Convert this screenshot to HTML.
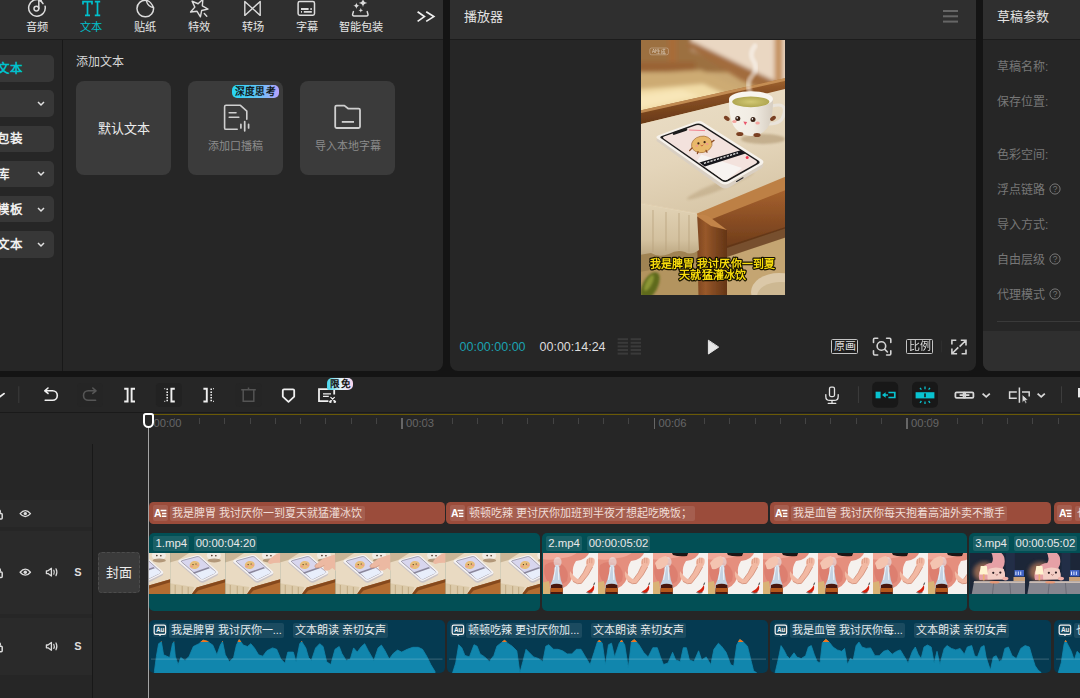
<!DOCTYPE html>
<html lang="zh-CN"><head><meta charset="utf-8"><title>editor</title>
<style>
*{box-sizing:border-box;margin:0;padding:0}
html,body{width:1080px;height:698px;overflow:hidden;background:#141414}
body{position:relative;font-family:"Liberation Sans",sans-serif;color:#e4e4e4;font-size:12px;line-height:1}
.abs{position:absolute}
.panel{position:absolute;background:#262626;overflow:hidden}
.hdr{position:absolute;left:0;top:0;right:0;height:40px;background:#2f2f2f;border-bottom:1px solid #1c1c1c}
.t{position:absolute;white-space:nowrap;line-height:1}
.tab{position:absolute;top:20px;width:54px;text-align:center;font-size:11.2px;line-height:14px;color:#e6e6e6}
.sbtn{position:absolute;left:-6px;width:60px;height:26.4px;background:#373737;border-radius:5px;color:#efefef;font-size:12.5px;font-weight:bold}
.sbtn span{position:absolute;left:-23px;top:7.8px;white-space:nowrap}
.card{position:absolute;top:81px;width:95px;height:94.4px;background:#3b3b3b;border-radius:8px}
.card .lbl{position:absolute;left:0;right:0;top:60px;text-align:center;font-size:11px;color:#8c8c8c;white-space:nowrap}
.plabel{position:absolute;left:14px;font-size:12px;color:#777;white-space:nowrap}
.row{position:absolute;left:0;width:92px;background:#2a2a2a}
.clip{position:absolute;overflow:hidden}
.chip{position:absolute;height:15px;border-radius:2px;white-space:nowrap;font-size:11px;line-height:15px;padding:0 2px;color:#e9e9e9;overflow:hidden}
svg{position:absolute;overflow:visible}
</style></head>
<body>
<svg style="left:0;top:0" width="0" height="0"><defs>
<filter id="tb" x="-10%" y="-10%" width="120%" height="120%"><feGaussianBlur stdDeviation="0.55"/></filter>
<filter id="tb2" x="-40%" y="-40%" width="180%" height="180%"><feGaussianBlur stdDeviation="2.2"/></filter>
<symbol id="thA" viewBox="0 0 55.3 41" preserveAspectRatio="none"><g filter="url(#tb)">
<rect x="-2" y="-2" width="60" height="45" fill="#e9dac2"/>
<polygon points="-2,-2 22,-2 8,7 -2,10" fill="#c9b596"/>
<ellipse cx="43.6" cy="2.4" rx="7" ry="5" fill="#f1ece4"/><ellipse cx="44" cy="7.4" rx="6.6" ry="2" fill="#9a7a58" opacity=".7"/>
<circle cx="41.6" cy="2.6" r=".8" fill="#3a2418"/><circle cx="45.6" cy="2.8" r=".8" fill="#3a2418"/>
<polygon points="20,43 26.5,34.4 58,25.4 58,43" fill="#b36d32"/>
<polygon points="20,43 26.5,34.4 58,25.4 58,28.4 28,37.4 23,43" fill="#86491f"/>
<polygon points="-2,30 24,34 21,43 -2,43" fill="#dccaa9"/>
<path d="M5 32V43M12 33V43M18 34V43" stroke="#c4ae88" stroke-width="1.2"/>
<path d="M8.6 10.6Q7 9.4 9 8.4L26.6 3.4Q28.6 3 30.2 4.2L47.4 19.6Q48.8 21 47 22.6L33.6 29.4Q31.6 30.4 29.8 29Z" fill="#c9c3c6"/>
<path d="M8.6 9.2Q7 8 9 7L26.6 2Q28.6 1.6 30.2 2.8L47.4 18.2Q48.8 19.6 47 21L33.6 27.6Q31.6 28.6 29.8 27.2Z" fill="#f4f2f4"/>
<path d="M11.4 9Q10.4 8.2 11.8 7.6L26.8 3.6Q28.2 3.4 29.4 4.2L45 18.4Q46 19.4 44.6 20.2L33.4 25.8Q31.8 26.4 30.4 25.4Z" fill="#d8d6ee" stroke="#5a5560" stroke-width=".45"/>
<path d="M24 19L38.6 14.6L45 18.4Q46 19.4 44.6 20.2L33.4 25.8Q31.8 26.4 30.4 25.4Z" fill="#e8eefb"/>
<path d="M22.6 19.6L38.4 14L39.6 15.2L24 20.8Z" fill="#8b879c"/>
<ellipse cx="24.4" cy="12" rx="5" ry="4" fill="#e8be78" transform="rotate(-14 24.4 12)"/>
<circle cx="22.8" cy="11.6" r=".6" fill="#3a2418"/><circle cx="25.8" cy="11" r=".6" fill="#3a2418"/>
<ellipse cx="21.6" cy="13.4" rx="1.4" ry=".8" fill="#f09a8c"/><ellipse cx="27.4" cy="12.2" rx="1.4" ry=".8" fill="#f09a8c"/>
</g></symbol>
<symbol id="thA2" viewBox="0 0 55.3 41" preserveAspectRatio="none"><use href="#thA" x="0" y="0" width="55.3" height="41"/><g filter="url(#tb)">
<path d="M58 1Q44 3 36 11Q33 14 36.4 15Q41 14.6 44 12.4Q42 16 44.6 17.4Q49 18 52 15L58 20Z" fill="#ecb9a2"/>
<path d="M36 11Q33 14 36.4 15Q41 14.6 44 12.4" fill="none" stroke="#cf8f78" stroke-width=".7"/>
</g></symbol>
<symbol id="thA3" viewBox="0 0 55.3 41" preserveAspectRatio="none"><use href="#thA" x="0" y="0" width="55.3" height="41"/><g filter="url(#tb)">
<path d="M58 -1Q48 1 43 8Q42 11 45 11Q50 9 58 10Z" fill="#ecb9a2"/></g></symbol>
<symbol id="thB" viewBox="0 0 55.3 41" preserveAspectRatio="none"><g filter="url(#tb)">
<rect x="-2" y="-2" width="60" height="45" fill="#f5f1ee"/>
<path d="M-2 -2H47Q44 7 33 8Q29 14 30 20Q29 31 20 35Q8 38 -2 30Z" fill="#e58f7e"/>
<path d="M-2 -2H36Q30 4 20 5Q8 8 -2 6Z" fill="#f0a898"/>
<path d="M2 12Q10 6 20 12Q27 18 24 28Q16 35 6 30Q-1 22 2 12Z" fill="#d97a6c" opacity=".75"/>
<path d="M27 18Q31 24 35.4 26.4Q41 20 43.6 12.6Q42 8 45 5.4Q48.6 3.4 51.4 6Q52.6 10 49.6 14Q46 22 38.4 30.4Q34.6 32 30 28.4Q26 24 27 18Z" fill="#f2b9a3"/>
<path d="M35.4 26.4Q41 20 43.6 12.6M30 28.4Q34.6 32 38.4 30.4Q46 22 49.6 14" fill="none" stroke="#cc836c" stroke-width=".7"/>
<path d="M44.4 6V11M46.6 4.6V10M48.8 5V10.4" stroke="#d8957e" stroke-width=".7"/>
<polygon points="-2,30 6,28 8,43 -2,43" fill="#d9b274"/>
<path d="M12.8 12Q11 14 11.6 18L9.4 27Q7 31 7 36V43H20V36Q20 31 17.8 27L16.4 18Q17 14 15.4 12Z" fill="#c3d2e2"/>
<path d="M8 32Q13.4 29.6 19.4 32L20 43H7Z" fill="#4a180a"/>
<path d="M7.6 35H19.8V39H7.4Z" fill="#b4581c"/>
<path d="M12.6 14L10.6 27M15.2 14L15.8 27" stroke="#fff" stroke-width=".9" opacity=".8"/>
<ellipse cx="14.6" cy="9" rx="4" ry="5" fill="#e8eef4" opacity=".55"/>
<path d="M44 38.4Q48.6 36.6 50.8 32Q52.4 36.6 48.6 39.6Q46 40.8 44 38.4Z" fill="#d4220f"/>
<path d="M50.8 32L51.6 29.6" stroke="#2c2c2c" stroke-width=".9"/>
<path d="M43.4 39.4Q46.4 41 49.4 39.6" stroke="#4a4a4a" stroke-width=".8" fill="none"/>
</g></symbol>
<symbol id="thB2" viewBox="0 0 55.3 41" preserveAspectRatio="none"><use href="#thB" x="0" y="0" width="55.3" height="41"/><g filter="url(#tb)">
<path d="M18 -2H36L34 3Q26 4 20 2Z" fill="#1c1414"/>
<path d="M2 10Q6 4 13 3Q17 6 14 12Q9 17 4 16Z" fill="#f4c4b0"/>
</g></symbol>
<symbol id="thC" viewBox="0 0 55.3 41" preserveAspectRatio="none"><g filter="url(#tb)">
<rect x="-2" y="-2" width="60" height="45" fill="#1b2537"/>
<rect x="36" y="-2" width="9" height="30" fill="#222e46"/>
<ellipse cx="15" cy="19" rx="11" ry="10" fill="#f09a66" opacity=".55" filter="url(#tb2)"/>
<path d="M21 -2Q32 -3 34.4 4Q36 11 33 15Q36 20 35 26L10 27Q8 20 12 15Q17 10 22 10Q25 6 21 -2Z" fill="#e6a0a6"/>
<path d="M19 16Q26 13 34 16Q36 21 35 26.6H18Q17 21 19 16Z" fill="#f3cdc4"/>
<circle cx="23.6" cy="19.8" r="1.1" fill="#2a1c20"/><circle cx="30.6" cy="19.6" r="1.1" fill="#2a1c20"/>
<path d="M26 21.4Q27.2 23 28.4 21.4" stroke="#7a3a3a" stroke-width=".6" fill="none"/>
<ellipse cx="35.6" cy="25.6" rx="3" ry="1.8" fill="#f0b0a8"/>
<path d="M11.2 13H17.2L18.4 21.4H10Z" fill="#fff3cf"/>
<rect x="13.4" y="21.4" width="1.6" height="6" fill="#e8b070"/>
<rect x="44.6" y="17" width="9.4" height="6.4" fill="#3f62c4"/>
<path d="M46 18.4V22M48.4 18.4V22M50.8 18.4V22" stroke="#dfe8ff" stroke-width="1"/>
<rect x="43.6" y="24" width="14" height="4.6" fill="#c9a27a"/>
<polygon points="4.6,28.2 58,28.2 58,43 2,43" fill="#86868f"/>
<polygon points="4.6,28.2 58,28.2 58,30 4.2,30" fill="#cbbcb4"/>
<path d="M24 30L22.6 43M40 30L41 43" stroke="#6c6c76" stroke-width="1"/>
<ellipse cx="25" cy="29.2" rx="5" ry="1.2" fill="#f2946a" opacity=".8"/>
</g></symbol>
</defs></svg>
<div class="panel" style="left:0;top:0;width:443px;height:371px;border-radius:0 0 8px 0">
<div class="hdr"></div>
<div class="tab" style="left:10px;color:#e6e6e6">音频</div>
<div class="tab" style="left:64px;color:#00c1cd">文本</div>
<div class="tab" style="left:118px;color:#e6e6e6">贴纸</div>
<div class="tab" style="left:172px;color:#e6e6e6">特效</div>
<div class="tab" style="left:226px;color:#e6e6e6">转场</div>
<div class="tab" style="left:280px;color:#e6e6e6">字幕</div>
<div class="tab" style="left:334px;color:#e6e6e6">智能包装</div>
<svg style="left:0;top:0" width="1" height="1" fill="none" stroke="#d6d6d6" stroke-width="1.5" stroke-linecap="round" stroke-linejoin="round" ><path d="M41.2 0.7A8.3 8.3 0 1 0 45.1 6.2" stroke="#dcdcdc"/><circle cx="36.4" cy="8.6" r="2.4" stroke="#dcdcdc"/><path d="M38.8 8.6V-1M38.8 0.2Q41.5 0.8 43 3.6" stroke="#dcdcdc"/><path d="M83 4.4V1.7H92V4.4M87.5 1.7V15.3M85 15.3H90M94.8 1.7H100.2M97.5 1.7V15.3M94.8 15.3H100.2" stroke="#00c1cd" stroke-width="1.7" stroke-linecap="butt" stroke-linejoin="miter"/><path d="M146 0.3A8.3 8.3 0 1 0 153.5 7.6" stroke="#dcdcdc"/><path d="M146 0.3Q150.5 0.6 153.5 7.6Q148.2 7.2 146 0.3Z" stroke="#dcdcdc" stroke-width="1.3"/><path d="M202.88 -0.66L202.33 5.82L208.01 8.99L201.68 10.48L200.41 16.86L197.05 11.30L190.59 12.07L194.84 7.14L192.11 1.24L198.11 3.76Z" stroke="#dcdcdc" stroke-width="1.4"/><path d="M204.3 13.6L206.8 16.3" stroke="#dcdcdc" stroke-width="1.4"/><path d="M244.8 1.4V15.4L260.2 1.4V15.4Z" stroke="#dcdcdc" stroke-width="1.4"/><rect x="298.1" y="1.6" width="16.4" height="13.6" rx="1.6" stroke="#dcdcdc"/><path d="M301 9H308.6M310.4 9H311.8M301 11.8H302M303.8 11.8H311.8" stroke="#dcdcdc" stroke-width="1.8" stroke-linecap="butt"/><path d="M353.4 11.6L352.6 14.4Q352.4 16 354 16H366.6Q368.2 16 368 14.4L367.2 11.6" stroke="#dcdcdc"/><path d="M363 -1.2999999999999998Q363.3612 2.6388 367.3 3Q363.3612 3.3612 363 7.3Q362.6388 3.3612 358.7 3Q362.6388 2.6388 363 -1.2999999999999998ZM356.4 2.5Q356.67719999999997 5.5228 359.7 5.8Q356.67719999999997 6.0771999999999995 356.4 9.1Q356.1228 6.0771999999999995 353.09999999999997 5.8Q356.1228 5.5228 356.4 2.5ZM360.8 8.0Q360.9932 10.106800000000002 363.1 10.3Q360.9932 10.4932 360.8 12.600000000000001Q360.6068 10.4932 358.5 10.3Q360.6068 10.106800000000002 360.8 8.0Z" fill="#dcdcdc" stroke="none"/><path d="M417.6 11.8L424.4 16.6L417.6 21.4M426.2 11.8L433.8 16.6L426.2 21.4" stroke="#f0f0f0" stroke-width="1.7" stroke-linecap="butt" stroke-linejoin="miter"/></svg>
<div class="abs" style="left:62px;top:40px;width:1px;height:331px;background:#181818"></div>
<div class="sbtn" style="top:55.2px;color:#00c1cd"><span>新建文本</span></div>
<div class="sbtn" style="top:90.4px;color:#efefef"><span>花字</span><svg style="left:42.5px;top:10.5px" width="8" height="6" viewBox="0 0 8 6"><path d="M1 1l3 3 3-3" fill="none" stroke="#e0e0e0" stroke-width="1.5"/></svg></div>
<div class="sbtn" style="top:125.6px;color:#efefef"><span>智能包装</span></div>
<div class="sbtn" style="top:160.8px;color:#efefef"><span>素材库</span><svg style="left:42.5px;top:10.5px" width="8" height="6" viewBox="0 0 8 6"><path d="M1 1l3 3 3-3" fill="none" stroke="#e0e0e0" stroke-width="1.5"/></svg></div>
<div class="sbtn" style="top:196.0px;color:#efefef"><span>文字模板</span><svg style="left:42.5px;top:10.5px" width="8" height="6" viewBox="0 0 8 6"><path d="M1 1l3 3 3-3" fill="none" stroke="#e0e0e0" stroke-width="1.5"/></svg></div>
<div class="sbtn" style="top:231.2px;color:#efefef"><span>识别文本</span><svg style="left:42.5px;top:10.5px" width="8" height="6" viewBox="0 0 8 6"><path d="M1 1l3 3 3-3" fill="none" stroke="#e0e0e0" stroke-width="1.5"/></svg></div>
<div class="t" style="left:76px;top:56px;font-size:12px;color:#d6d6d6">添加文本</div>
<div class="card" style="left:76px"><div class="t" style="left:0;width:95px;text-align:center;top:41px;font-size:13px;color:#ececec">默认文本</div></div>
<div class="card" style="left:188px"><svg style="left:-188px;top:-81px" width="1" height="1" fill="none" stroke="#cfcfcf" stroke-width="1.6" stroke-linecap="round" stroke-linejoin="round"><path d="M237.2 129.3H226Q224.6 129.3 224.6 127.9V106.7Q224.6 105.3 226 105.3H240.4L246.8 111.2V119.2"/><path d="M229.2 112.7H236M229.2 117.3H238.8"/><path d="M240.9 124.4V128M244.7 121.5V130.8M248.6 124.4V128" stroke-width="1.7"/></svg><div class="lbl">添加口播稿</div><div class="abs" style="left:44px;top:4px;width:47px;height:13px;border-radius:5px;background:linear-gradient(90deg,#27d5f2 0%,#62c4f6 55%,#b7a2ff 100%);color:#101820;font-size:9.7px;font-weight:bold;line-height:13px;text-align:center;letter-spacing:0.4px">深度思考</div></div>
<div class="card" style="left:300px"><svg style="left:-300px;top:-81px" width="1" height="1" fill="none" stroke="#cfcfcf" stroke-width="1.6" stroke-linecap="round" stroke-linejoin="round"><path d="M336.6 105.6H344.4L348.4 108.7H358.6Q360 108.7 360 110.1V126.6Q360 128 358.6 128H336.6Q335.2 128 335.2 126.6V107Q335.2 105.6 336.6 105.6Z" stroke-width="1.8"/><path d="M341.8 121.9H354" stroke-width="1.8" stroke-linecap="butt"/></svg><div class="lbl">导入本地字幕</div></div>
</div>
<div class="panel" style="left:450px;top:0;width:526px;height:371px;border-radius:0 0 8px 8px">
<div class="hdr"></div>
<div class="t" style="left:14px;top:10px;font-size:13px;color:#e2e2e2">播放器</div>
<div class="abs" style="left:493px;top:10px;width:15px;height:1.5px;background:#666;box-shadow:0 5.3px 0 #666,0 10.6px 0 #666"></div>
<svg style="left:191px;top:40px;overflow:hidden" width="144" height="255" viewBox="0 0 144 255">
<defs>
<filter id="bl3" x="-20%" y="-20%" width="140%" height="140%"><feGaussianBlur stdDeviation="2.2"/></filter>
<filter id="bl1" x="-20%" y="-20%" width="140%" height="140%"><feGaussianBlur stdDeviation="0.9"/></filter>
<filter id="bl05" x="-20%" y="-20%" width="140%" height="140%"><feGaussianBlur stdDeviation="0.45"/></filter>
<linearGradient id="gEdge" x1="0" y1="0" x2="0.22" y2="1"><stop offset="0" stop-color="#b87c40"/><stop offset="0.4" stop-color="#8e5426"/><stop offset="1" stop-color="#643616"/></linearGradient>
<linearGradient id="gCloth" x1="0" y1="0" x2="0.3" y2="1"><stop offset="0" stop-color="#ebdfc8"/><stop offset="0.6" stop-color="#e4d5ba"/><stop offset="1" stop-color="#d9c8a9"/></linearGradient>
<linearGradient id="gHang" x1="0" y1="0" x2="0" y2="1"><stop offset="0" stop-color="#e2d3b6"/><stop offset="0.7" stop-color="#d3c19f"/><stop offset="1" stop-color="#bba680"/></linearGradient>
<linearGradient id="gLeg" x1="0" y1="0" x2="1" y2="0"><stop offset="0" stop-color="#7c4520"/><stop offset="0.3" stop-color="#98582a"/><stop offset="0.55" stop-color="#834a22"/><stop offset="1" stop-color="#643516"/></linearGradient>
<linearGradient id="gApron" x1="0" y1="0" x2="0" y2="1"><stop offset="0" stop-color="#a6622e"/><stop offset="0.5" stop-color="#8a4e24"/><stop offset="1" stop-color="#6e3c1a"/></linearGradient>
<linearGradient id="gCup" x1="0" y1="0" x2="1" y2="0"><stop offset="0" stop-color="#f6f2ea"/><stop offset="0.55" stop-color="#f1ece3"/><stop offset="1" stop-color="#d6cdc0"/></linearGradient>
<radialGradient id="gTea" cx="0.5" cy="0.5" r="0.6"><stop offset="0" stop-color="#d2c873"/><stop offset="1" stop-color="#a9a04a"/></radialGradient>
</defs>
<rect width="144" height="255" fill="#c9a772"/>
<g filter="url(#bl3)">
<rect x="-8" y="-8" width="160" height="40" fill="#9c7040"/>
<polygon points="50,-8 152,-8 152,56 104,36 50,10" fill="#ead7c2"/>
<polygon points="44,5 52,2 152,50 152,62 100,40" fill="#a26c3c"/>
<rect x="27.5" y="-8" width="8" height="44" fill="#a86c38"/>
<rect x="-8" y="22" width="62" height="10" fill="#9a6434"/>
<rect x="133.5" y="-8" width="8" height="52" fill="#c59260"/>
<polygon points="-8,34 60,30 120,58 -8,90" fill="#cdab73"/>
<polygon points="-8,50 62,44 92,58 40,70 -8,80" fill="#f1dba6"/>
<polygon points="-8,56 40,50 60,56 -8,70" fill="#f8e6b8"/>
</g>
<g filter="url(#bl05)">
<polygon points="-2,70.8 146,37.8 146,49 -2,84.4" fill="url(#gEdge)"/>
<polygon points="-2,70.8 146,37.8 146,40.4 -2,73.6" fill="#cf9a5e" opacity=".8"/>
<!-- floor / rug under table -->
<polygon points="84,196 146,172 146,257 84,257" fill="#c4a572"/>
<polygon points="-2,206 58,206 58,257 -2,257" fill="#b3945f"/>
<polygon points="-2,206 58,206 58,222 -2,232" fill="#8f7448" opacity=".55"/>
<ellipse cx="138" cy="252" rx="28" ry="19" fill="#dbc8a8"/>
<ellipse cx="140" cy="256" rx="24" ry="14" fill="#cdb892"/>
<!-- table right: top face, apron, shadow -->
<polygon points="52,172 146,134 146,152 68,183" fill="#bd8045"/>
<polygon points="66,181 146,149.5 146,188 86,208" fill="url(#gApron)"/>
<polygon points="86,206 146,186.5 146,197 86,217" fill="#5d3418" opacity=".75"/>
<!-- leg -->
<polygon points="55.5,176 70,183 86,190 86,257 57.5,257" fill="url(#gLeg)"/>
<path d="M55.5 176Q62 172 70 178L86 190L70 186Z" fill="#c28448"/>
<!-- cloth -->
<polygon points="-2,84.6 146,48.6 146,136 56,173.6 -2,163" fill="url(#gCloth)"/>
<path d="M-2 163L56 173.6L58 210Q50 216 44 212Q36 209 28 214Q18 218 10 213L-2 215Z" fill="url(#gHang)"/>
<path d="M12 170V212M25 172V211M38 173V210M48 175V212" stroke="#b9a47e" stroke-width="1.6" opacity=".5" fill="none"/>
<path d="M-2 163L56 173.6" stroke="#efe3cb" stroke-width="1.2" opacity=".35"/>
</g>
<!-- cup shadow -->
<ellipse cx="122" cy="99" rx="22" ry="5" fill="#8a6a3c" opacity=".35" filter="url(#bl1)"/>
<ellipse cx="80" cy="147" rx="36" ry="4" fill="#8a6a3c" opacity=".22" filter="url(#bl1)" transform="rotate(-22 76 148)"/>
<!-- steam -->
<path d="M110 54Q104 44 111 36Q118 28 112 20Q108 13 114 6" stroke="#fff" stroke-width="5" fill="none" opacity=".45" filter="url(#bl1)" stroke-linecap="round"/>
<!-- cup -->
<g filter="url(#bl05)">
<path d="M131 66Q146 62 143 74Q141 84 128 84" fill="none" stroke="#e9e3da" stroke-width="3.2"/>
<path d="M88 59Q88 82 95 89Q102 96 110 96Q119 96 125.5 89Q132 82 132 59Z" fill="url(#gCup)"/>
<ellipse cx="110" cy="59" rx="22" ry="7.8" fill="#f8f5ef"/>
<ellipse cx="109.8" cy="61.8" rx="18.6" ry="5.4" fill="url(#gTea)"/>
<ellipse cx="85.8" cy="78.4" rx="3.2" ry="2" fill="#7a3f22" transform="rotate(35 85.8 78.4)"/>
<ellipse cx="132" cy="78.4" rx="3.2" ry="2" fill="#7a3f22" transform="rotate(-35 132 78.4)"/>
<ellipse cx="98.8" cy="94" rx="3.6" ry="2" fill="#7a3f22"/><ellipse cx="116" cy="95" rx="3.6" ry="2" fill="#7a3f22"/>
<circle cx="96.8" cy="78.6" r="2.5" fill="#3a2418"/><circle cx="112" cy="79.6" r="2.5" fill="#3a2418"/>
<circle cx="96.2" cy="77.9" r=".8" fill="#fff"/><circle cx="111.4" cy="78.9" r=".8" fill="#fff"/>
<ellipse cx="93.4" cy="81.6" rx="2.2" ry="1.5" fill="#f3a39d"/><ellipse cx="116.6" cy="83" rx="2.2" ry="1.5" fill="#f3a39d"/>
<path d="M102.4 81.6L106.2 82L104.2 85.2Z" fill="#e9566c"/>
</g>
<!-- phone -->
<g filter="url(#bl05)">
<path d="M17 102Q13.5 100 17.5 98.2L55 84.6Q59 83.2 62.4 85.4L120.6 122.6Q124.4 125 120.6 128.2L88 147.4Q84 149.6 80 147.2Z" fill="#d9cfc2"/>
<path d="M17 99Q13.5 97 17.5 95.2L55 81.6Q59 80.2 62.4 82.4L120.6 119.6Q124.4 122 120.6 124.8L88 143.4Q84 145.6 80 143.2Z" fill="#f6f2ec"/>
<path d="M20.4 98.6Q18 97.2 20.8 96L55 83.8Q58.2 82.8 61 84.6L117.4 120.4Q120 122.2 117.2 124L87 141.2Q84 142.8 81 141Z" fill="#1d1b1c"/>
<path d="M22.6 98.4Q21 97.4 23 96.6L55.2 85.2Q57.8 84.4 60.2 85.8L115.2 120.8Q117 122.2 115 123.4L86.6 139.6Q84 140.8 81.6 139.4Z" fill="#f3e2dd"/>
<path d="M60.2 114.4L101 128L86.6 139.6Q84 140.8 81.6 139.4L56 121Z" fill="#f7f3f1"/>
<path d="M58.4 122.6L99.6 110.2L104.6 113.6L63.8 126.6Z" fill="#19171a"/>
<path d="M63 123.4L97 112.8" stroke="#e8e8e8" stroke-width="1.3" stroke-dasharray="2.2 1.2"/>
<circle cx="106.2" cy="117.6" r="1.5" fill="#f0384e"/>
<path d="M33 93.6L45 89.4" stroke="#1d1b1c" stroke-width="2.6" stroke-linecap="round"/>
<path d="M48 90L64 90.6" stroke="#f06a7a" stroke-width="1" opacity=".8"/>
<ellipse cx="60.8" cy="104.4" rx="10.4" ry="8.2" fill="#e9b96a" stroke="#9a6228" stroke-width=".6" transform="rotate(-12 60.8 104.4)"/>
<circle cx="57.4" cy="103.4" r="1.1" fill="#3a2418"/><circle cx="63.6" cy="102.2" r="1.1" fill="#3a2418"/>
<ellipse cx="55.8" cy="105.8" rx="1.5" ry=".9" fill="#f29a8c"/><ellipse cx="66" cy="104" rx="1.5" ry=".9" fill="#f29a8c"/>
<path d="M59.6 105.2Q61 107 62.4 104.8" stroke="#b8402c" stroke-width=".7" fill="none"/>
<path d="M51 108L48.6 110.6M70.6 102L73 100.4M57 111.6L56.4 113.6M65 110.4L66 112.2" stroke="#8a4a22" stroke-width="1.3" stroke-linecap="round"/>
<path d="M95.6 141.4L102 137.8" stroke="#2a2828" stroke-width="1.2" stroke-linecap="round"/>
</g>
<!-- leaf -->
<ellipse cx="9" cy="246" rx="7.5" ry="15" fill="#5f6b1e" transform="rotate(28 9 246)" filter="url(#bl1)"/>
<ellipse cx="8" cy="243" rx="3" ry="9" fill="#8c9636" transform="rotate(28 8 243)" filter="url(#bl1)"/>
<!-- AI tag -->
<rect x="8.8" y="8" width="18.6" height="6.8" rx="1.8" fill="none" stroke="#fff" stroke-width=".5" opacity=".55"/>
<text x="18.1" y="13.2" font-size="4.6" fill="#fff" opacity=".7" text-anchor="middle" font-family="Liberation Sans, sans-serif">AI生成</text>
<!-- subtitles -->
<g font-family="Liberation Sans, sans-serif" font-weight="bold" font-size="10.8" text-anchor="middle" stroke-linejoin="round">
<text x="71.4" y="227.6" stroke="#141000" stroke-width="2.4" fill="#141000" textLength="125" lengthAdjust="spacingAndGlyphs">我是脾胃 我讨厌你一到夏</text>
<text x="71.4" y="227.6" fill="#f7dc0c" textLength="125" lengthAdjust="spacingAndGlyphs">我是脾胃 我讨厌你一到夏</text>
<text x="71.8" y="239.2" stroke="#141000" stroke-width="2.4" fill="#141000" textLength="67" lengthAdjust="spacingAndGlyphs">天就猛灌冰饮</text>
<text x="71.8" y="239.2" fill="#f7dc0c" textLength="67" lengthAdjust="spacingAndGlyphs">天就猛灌冰饮</text>
</g>
</svg>
<div class="t" style="left:9.5px;top:341px;font-size:12.5px;color:#1ba1b0">00:00:00:00</div>
<div class="t" style="left:89.5px;top:341px;font-size:12.5px;color:#dcdcdc">00:00:14:24</div>
<svg style="left:0;top:0" width="1" height="1" fill="none" stroke="#d6d6d6" stroke-width="1.5" stroke-linecap="round" stroke-linejoin="round" ><rect x="167.60000000000002" y="338.2" width="10.4" height="2" fill="#3a3a3a" stroke="none"/><rect x="167.60000000000002" y="341.8" width="10.4" height="2" fill="#3a3a3a" stroke="none"/><rect x="167.60000000000002" y="345.4" width="10.4" height="2" fill="#3a3a3a" stroke="none"/><rect x="167.60000000000002" y="349.0" width="10.4" height="2" fill="#3a3a3a" stroke="none"/><rect x="167.60000000000002" y="352.6" width="10.4" height="2" fill="#3a3a3a" stroke="none"/><rect x="180.60000000000002" y="338.2" width="10.4" height="2" fill="#3a3a3a" stroke="none"/><rect x="180.60000000000002" y="341.8" width="10.4" height="2" fill="#3a3a3a" stroke="none"/><rect x="180.60000000000002" y="345.4" width="10.4" height="2" fill="#3a3a3a" stroke="none"/><rect x="180.60000000000002" y="349.0" width="10.4" height="2" fill="#3a3a3a" stroke="none"/><rect x="180.60000000000002" y="352.6" width="10.4" height="2" fill="#3a3a3a" stroke="none"/><path d="M258.4 340.6V354L268.4 347.3Z" fill="#e6e6e6" stroke="#e6e6e6" stroke-width="1"/><path d="M423.5 342.5V339.5Q423.5 338.3 424.7 338.3H427.7M436.59999999999997 338.3H439.59999999999997Q440.79999999999995 338.3 440.79999999999995 339.5V342.5M440.79999999999995 350.8V353.8Q440.79999999999995 355 439.59999999999997 355H436.59999999999997M427.7 355H424.7Q423.5 355 423.5 353.8V350.8" stroke="#d4d4d4" stroke-width="1.6"/><circle cx="431.4" cy="346" r="4.3" stroke="#d4d4d4" stroke-width="1.6"/><path d="M434.79999999999995 349.4L437.4 352" stroke="#d4d4d4" stroke-width="1.6"/><path d="M501.9 344.4V340.2H506.29999999999995M516 349.6V353.8H511.6M510.8 340.2H516V345.4M516 340.2L509.6 346.59999999999997M501.9 348.6V353.8H507.09999999999997M501.9 353.8L508.29999999999995 347.40000000000003" stroke="#d4d4d4" stroke-width="1.6" stroke-linecap="butt" stroke-linejoin="miter"/><path d="M491.4 341V352" stroke="#303030" stroke-width="1"/></svg><div class="abs" style="left:381.20000000000005px;top:339px;width:27px;height:15.4px;border:1.4px solid #c4c4c4;border-radius:1.5px;background:#1e1e1e;color:#dedede;font-size:11px;line-height:12.6px;text-align:center;letter-spacing:-0.5px">原画</div><div class="abs" style="left:456.20000000000005px;top:339px;width:27px;height:15.4px;border:1.4px solid #c4c4c4;border-radius:1.5px;background:#1e1e1e;color:#dedede;font-size:11px;line-height:12.6px;text-align:center;letter-spacing:-0.5px">比例</div>
</div>
<div class="panel" style="left:983px;top:0;width:97px;height:371px;border-radius:0 0 0 8px">
<div class="hdr"></div>
<div class="t" style="left:14px;top:10px;font-size:13px;color:#e2e2e2">草稿参数</div>
<div class="plabel" style="top:60.8px">草稿名称:</div>
<div class="plabel" style="top:95.8px">保存位置:</div>
<div class="plabel" style="top:148.8px">色彩空间:</div>
<div class="plabel" style="top:183.8px">浮点链路</div>
<svg style="left:65.8px;top:182.6px" width="12" height="12" viewBox="0 0 12 12"><circle cx="6" cy="6" r="5.1" fill="none" stroke="#777" stroke-width="1"/><text x="6" y="9" font-size="8.4" text-anchor="middle" fill="#777" font-family="Liberation Sans">?</text></svg>
<div class="plabel" style="top:218.8px">导入方式:</div>
<div class="plabel" style="top:253.8px">自由层级</div>
<svg style="left:65.8px;top:252.6px" width="12" height="12" viewBox="0 0 12 12"><circle cx="6" cy="6" r="5.1" fill="none" stroke="#777" stroke-width="1"/><text x="6" y="9" font-size="8.4" text-anchor="middle" fill="#777" font-family="Liberation Sans">?</text></svg>
<div class="plabel" style="top:288.8px">代理模式</div>
<svg style="left:65.8px;top:287.6px" width="12" height="12" viewBox="0 0 12 12"><circle cx="6" cy="6" r="5.1" fill="none" stroke="#777" stroke-width="1"/><text x="6" y="9" font-size="8.4" text-anchor="middle" fill="#777" font-family="Liberation Sans">?</text></svg>
<div class="abs" style="left:14px;top:321px;width:90px;height:1px;background:#3a3a3a"></div>
<div class="abs" style="left:0;top:331px;width:97px;height:40px;background:#2f2f2f"></div>
</div>
<div class="panel" style="left:0;top:377px;width:1080px;height:321px;background:#262626">
<div class="abs" style="left:0;top:35px;width:1080px;height:1px;background:#1a1a1a"></div>
<svg style="left:0;top:0" width="1" height="1" fill="none" stroke="#d6d6d6" stroke-width="1.5" stroke-linecap="round" stroke-linejoin="round" ><path d="M-3 22L4 16.6" stroke="#f0f0f0" stroke-width="1.8"/><path d="M18.8 9.3V26" stroke="#3d3d3d" stroke-width="1" stroke-linecap="butt"/><path d="M858.4 9.3V26" stroke="#3d3d3d" stroke-width="1" stroke-linecap="butt"/><path d="M1061.5 9.3V26" stroke="#3d3d3d" stroke-width="1" stroke-linecap="butt"/><rect x="77" y="6" width="26" height="24" rx="4" fill="#252525" stroke="none"/><rect x="155.8" y="6" width="26" height="24" rx="4" fill="#222222" stroke="none"/><rect x="235.6" y="6" width="26" height="24" rx="4" fill="#252525" stroke="none"/><path d="M48 11L44.8 13.8L48 16.4M45.2 13.8H52.6A4.7 4.7 0 0 1 52.6 23.2H45.2" stroke="#f0f0f0" stroke-width="1.6"/><path d="M92.8 11L96 13.8L92.8 16.4M95.6 13.8H88.2A4.7 4.7 0 0 0 88.2 23.2H95.6" stroke="#565656" stroke-width="1.6"/><path d="M124.19999999999999 11.7H127.6V24.5H124.19999999999999" stroke="#f0f0f0" stroke-width="1.9" stroke-linecap="butt" stroke-linejoin="miter"/><path d="M135.0 11.7H131.6V24.5H135.0" stroke="#f0f0f0" stroke-width="1.9" stroke-linecap="butt" stroke-linejoin="miter"/><path d="M167.2 11.6V24.6" stroke="#f0f0f0" stroke-width="1.6" stroke-dasharray="1.5 1.3" stroke-linecap="butt"/><path d="M164.39999999999998 11.6H165.2M164.39999999999998 24.4H165.2" stroke="#f0f0f0" stroke-width="1.4" stroke-linecap="butt"/><path d="M174.8 11.7H171.4V24.5H174.8" stroke="#f0f0f0" stroke-width="1.9" stroke-linecap="butt" stroke-linejoin="miter"/><path d="M203.4 11.7H206.8V24.5H203.4" stroke="#f0f0f0" stroke-width="1.9" stroke-linecap="butt" stroke-linejoin="miter"/><path d="M211.2 11.6V24.6" stroke="#f0f0f0" stroke-width="1.6" stroke-dasharray="1.5 1.3" stroke-linecap="butt"/><path d="M213.2 11.6H214.0M213.2 24.4H214.0" stroke="#f0f0f0" stroke-width="1.4" stroke-linecap="butt"/><path d="M241.2 12.8H255.8M248.5 10.4V12.8M243.2 13V24.3H253.8V13" stroke="#545454" stroke-width="1.5" stroke-linecap="butt" stroke-linejoin="miter"/><path d="M282.8 13.6Q282.8 12.4 284 12.4H293Q294.2 12.4 294.2 13.6V19.6L288.5 24.8L282.8 19.6Z" stroke="#f0f0f0" stroke-width="1.8"/><path d="M334.2 17.4V12.1H319V24.1H328.4" stroke="#f0f0f0" stroke-width="1.8" stroke-linecap="butt" stroke-linejoin="miter"/><path d="M323 16.8H331M323 19.4H328.8" stroke="#f0f0f0" stroke-width="1.3" stroke-linecap="butt"/><path d="M330.8 20.4L334.4 23.8M334.4 20.4L330.8 23.8" stroke="#f0f0f0" stroke-width="1.2"/><circle cx="330.4" cy="24.8" r="1.3" fill="#f0f0f0" stroke="none"/><circle cx="334.8" cy="24.8" r="1.3" fill="#f0f0f0" stroke="none"/><rect x="829.5" y="10.2" width="5" height="9.4" rx="1.5" stroke="#e4e4e4" stroke-width="1.3"/><path d="M825.8 17.6V19.4Q825.8 23.4 829.8 23.4H834.2Q838.2 23.4 838.2 19.4V17.6M832 23.6V26.2M828.2 26.3H835.8" stroke="#e4e4e4" stroke-width="1.3"/><rect x="872.2" y="4.8" width="26" height="26" rx="5" fill="#181818" stroke="none"/><rect x="912" y="4.8" width="26" height="26" rx="5" fill="#181818" stroke="none"/><rect x="875.6" y="14.7" width="5" height="6.6" fill="#08c3d0" stroke="none"/><path d="M882 18L885.6 15.3V20.7Z" fill="#08c3d0" stroke="none"/><path d="M885 18H888" stroke="#08c3d0" stroke-width="1.4" stroke-linecap="butt"/><path d="M888.4 15.5H894.8V20.5H888.4" stroke="#08c3d0" stroke-width="1.7" stroke-linecap="butt" stroke-linejoin="miter"/><rect x="915.6" y="15.2" width="18.8" height="6.2" fill="#08c3d0" stroke="none"/><rect x="924.2" y="16.4" width="1.6" height="3.8" fill="#181818" stroke="none"/><path d="M925 9.6V12.2M920 10.8L921.4 12.6M930 10.8L928.6 12.6M925 24.4V27M920 25.8L921.4 24M930 25.8L928.6 24" stroke="#08c3d0" stroke-width="1.3" stroke-linecap="butt"/><rect x="955.4" y="15.3" width="9.8" height="5.6" rx="1.2" stroke="#d8d8d8" stroke-width="1.8"/><rect x="963.6" y="15.3" width="9.8" height="5.6" rx="1.2" stroke="#d8d8d8" stroke-width="1.8"/><path d="M959.6 18.1H969.4" stroke="#d8d8d8" stroke-width="1.8" stroke-linecap="butt"/><path d="M982.6 16.6L986.2 19.8L989.8000000000001 16.6" stroke="#d8d8d8" stroke-width="1.8" stroke-linecap="butt" stroke-linejoin="miter"/><path d="M1037.6000000000001 16.6L1041.2 19.8L1044.8 16.6" stroke="#d8d8d8" stroke-width="1.8" stroke-linecap="butt" stroke-linejoin="miter"/><path d="M1016.8 15.1H1009.6V21.2H1016.8M1019.4 10.4V25.8M1022 15.1H1029.2V19.4" stroke="#d8d8d8" stroke-width="1.5" stroke-linecap="butt" stroke-linejoin="miter"/><path d="M1022.2 17.8V25.4L1024.2 23.8L1025.6 26.4L1026.8 25.8L1025.6 23.2L1028 23Z" fill="#d8d8d8" stroke="#262626" stroke-width="0.6"/><rect x="1078" y="11" width="4" height="9.4" fill="#e8e8e8" stroke="none"/></svg><div class="abs" style="left:327px;top:1px;width:26.4px;height:12px;border-radius:5px 5px 5px 2px;background:linear-gradient(90deg,#45d6ee 0%,#8fe4f2 25%,#e6f3f8 55%,#f6d3ef 100%);color:#111;font-size:9.5px;font-weight:bold;line-height:12px;text-align:center;letter-spacing:1.6px;padding-left:2px">限免</div>
<div class="abs" style="left:150px;top:37px;width:930px;height:1px;background:#6a5a06"></div>
<div class="t" style="left:153.50px;top:41px;font-size:11.2px;color:#666">00:00</div>
<div class="abs" style="left:173.75px;top:40.5px;width:1px;height:6.5px;background:#444"></div>
<div class="abs" style="left:199.00px;top:40.5px;width:1px;height:6.5px;background:#444"></div>
<div class="abs" style="left:224.25px;top:40.5px;width:1px;height:6.5px;background:#444"></div>
<div class="abs" style="left:249.50px;top:40.5px;width:1px;height:6.5px;background:#444"></div>
<div class="abs" style="left:274.75px;top:40.5px;width:1px;height:6.5px;background:#444"></div>
<div class="abs" style="left:300.00px;top:40.5px;width:1px;height:6.5px;background:#444"></div>
<div class="abs" style="left:325.25px;top:40.5px;width:1px;height:6.5px;background:#444"></div>
<div class="abs" style="left:350.50px;top:40.5px;width:1px;height:6.5px;background:#444"></div>
<div class="abs" style="left:375.75px;top:40.5px;width:1px;height:6.5px;background:#444"></div>
<div class="abs" style="left:401.00px;top:40.5px;width:1.5px;height:11.5px;background:#666"></div>
<div class="t" style="left:406.00px;top:41px;font-size:11.2px;color:#666">00:03</div>
<div class="abs" style="left:426.25px;top:40.5px;width:1px;height:6.5px;background:#444"></div>
<div class="abs" style="left:451.50px;top:40.5px;width:1px;height:6.5px;background:#444"></div>
<div class="abs" style="left:476.75px;top:40.5px;width:1px;height:6.5px;background:#444"></div>
<div class="abs" style="left:502.00px;top:40.5px;width:1px;height:6.5px;background:#444"></div>
<div class="abs" style="left:527.25px;top:40.5px;width:1px;height:6.5px;background:#444"></div>
<div class="abs" style="left:552.50px;top:40.5px;width:1px;height:6.5px;background:#444"></div>
<div class="abs" style="left:577.75px;top:40.5px;width:1px;height:6.5px;background:#444"></div>
<div class="abs" style="left:603.00px;top:40.5px;width:1px;height:6.5px;background:#444"></div>
<div class="abs" style="left:628.25px;top:40.5px;width:1px;height:6.5px;background:#444"></div>
<div class="abs" style="left:653.50px;top:40.5px;width:1.5px;height:11.5px;background:#666"></div>
<div class="t" style="left:658.50px;top:41px;font-size:11.2px;color:#666">00:06</div>
<div class="abs" style="left:678.75px;top:40.5px;width:1px;height:6.5px;background:#444"></div>
<div class="abs" style="left:704.00px;top:40.5px;width:1px;height:6.5px;background:#444"></div>
<div class="abs" style="left:729.25px;top:40.5px;width:1px;height:6.5px;background:#444"></div>
<div class="abs" style="left:754.50px;top:40.5px;width:1px;height:6.5px;background:#444"></div>
<div class="abs" style="left:779.75px;top:40.5px;width:1px;height:6.5px;background:#444"></div>
<div class="abs" style="left:805.00px;top:40.5px;width:1px;height:6.5px;background:#444"></div>
<div class="abs" style="left:830.25px;top:40.5px;width:1px;height:6.5px;background:#444"></div>
<div class="abs" style="left:855.50px;top:40.5px;width:1px;height:6.5px;background:#444"></div>
<div class="abs" style="left:880.75px;top:40.5px;width:1px;height:6.5px;background:#444"></div>
<div class="abs" style="left:906.00px;top:40.5px;width:1.5px;height:11.5px;background:#666"></div>
<div class="t" style="left:911.00px;top:41px;font-size:11.2px;color:#666">00:09</div>
<div class="abs" style="left:931.25px;top:40.5px;width:1px;height:6.5px;background:#444"></div>
<div class="abs" style="left:956.50px;top:40.5px;width:1px;height:6.5px;background:#444"></div>
<div class="abs" style="left:981.75px;top:40.5px;width:1px;height:6.5px;background:#444"></div>
<div class="abs" style="left:1007.00px;top:40.5px;width:1px;height:6.5px;background:#444"></div>
<div class="abs" style="left:1032.25px;top:40.5px;width:1px;height:6.5px;background:#444"></div>
<div class="abs" style="left:1057.50px;top:40.5px;width:1px;height:6.5px;background:#444"></div>
<div class="abs" style="left:92px;top:67px;width:1px;height:254px;background:#181818"></div>
<div class="row" style="top:123px;height:27px"></div>
<div class="row" style="top:154px;height:83px"></div>
<div class="row" style="top:241px;height:57px"></div>
<svg style="left:0;top:0" width="1" height="1" fill="none" stroke="#d6d6d6" stroke-width="1.5" stroke-linecap="round" stroke-linejoin="round" ><rect x="-7.2" y="136.4" width="9.4" height="5.6" rx="1" stroke="#dcdcdc" stroke-width="1.5"/><path d="M-4.8 136.4V135.2A2.6 2.6 0 0 1 0.4 135.2" stroke="#dcdcdc" stroke-width="1.4"/><path d="M20.1 136.6Q25.3 130.6 30.5 136.6Q25.3 142.6 20.1 136.6Z" stroke="#dcdcdc" stroke-width="1.3"/><circle cx="25.3" cy="136.6" r="1.7" fill="#dcdcdc" stroke="none"/><rect x="-7.2" y="195.0" width="9.4" height="5.6" rx="1" stroke="#dcdcdc" stroke-width="1.5"/><path d="M-4.8 195.0V193.8A2.6 2.6 0 0 1 0.4 193.8" stroke="#dcdcdc" stroke-width="1.4"/><path d="M20.1 195.2Q25.3 189.2 30.5 195.2Q25.3 201.2 20.1 195.2Z" stroke="#dcdcdc" stroke-width="1.3"/><circle cx="25.3" cy="195.2" r="1.7" fill="#dcdcdc" stroke="none"/><path d="M46.4 193.8H48L51.4 191.3V199.1L48 196.6H46.4Z" stroke="#dcdcdc" stroke-width="1.3"/><path d="M53.8 193.2Q54.8 195.2 53.8 197.2M56 191.8Q57.8 195.2 56 198.6" stroke="#dcdcdc" stroke-width="1.2"/><rect x="-7.2" y="269.2" width="9.4" height="5.6" rx="1" stroke="#dcdcdc" stroke-width="1.5"/><path d="M-4.8 269.2V268.0A2.6 2.6 0 0 1 0.4 268.0" stroke="#dcdcdc" stroke-width="1.4"/><path d="M46.4 268.0H48L51.4 265.5V273.3L48 270.8H46.4Z" stroke="#dcdcdc" stroke-width="1.3"/><path d="M53.8 267.4Q54.8 269.4 53.8 271.4M56 266.0Q57.8 269.4 56 272.8" stroke="#dcdcdc" stroke-width="1.2"/></svg><div class="t" style="left:74.2px;top:190.0px;font-size:11px;font-weight:bold;color:#dedede">S</div><div class="t" style="left:74.2px;top:264.2px;font-size:11px;font-weight:bold;color:#dedede">S</div>
<div class="abs" style="left:97.5px;top:175px;width:42px;height:41px;background:#3a3a3a;border:1px dashed #4c4c4c;border-radius:4px;text-align:center;line-height:39px;font-size:13px;color:#ececec">封面</div>
<div class="clip" style="left:149px;top:125px;width:295.5px;height:22px;background:#9b4c3b;border-radius:4.5px"><div class="abs" style="left:3.6px;top:3.4px;width:15px;height:15.2px;border-radius:2px;background:rgba(255,255,255,.10)"></div><svg style="left:0;top:0" width="1" height="1"><text x="5" y="15" font-family="Liberation Sans" font-weight="bold" font-size="10.5" fill="#fff">A</text><path d="M11.6 8.6H17.4M13 11.4H17.4M13 14.2H17.4" stroke="#fff" stroke-width="1.5"/></svg><div class="chip" style="left:21.4px;top:4px;background:rgba(255,255,255,.10);width:194.6px;color:#f0dcd6">我是脾胃 我讨厌你一到夏天就猛灌冰饮</div></div>
<div class="clip" style="left:446px;top:125px;width:321.5px;height:22px;background:#9b4c3b;border-radius:4.5px"><div class="abs" style="left:3.6px;top:3.4px;width:15px;height:15.2px;border-radius:2px;background:rgba(255,255,255,.10)"></div><svg style="left:0;top:0" width="1" height="1"><text x="5" y="15" font-family="Liberation Sans" font-weight="bold" font-size="10.5" fill="#fff">A</text><path d="M11.6 8.6H17.4M13 11.4H17.4M13 14.2H17.4" stroke="#fff" stroke-width="1.5"/></svg><div class="chip" style="left:21.4px;top:4px;background:rgba(255,255,255,.10);width:227.6px;color:#f0dcd6">顿顿吃辣 更讨厌你加班到半夜才想起吃晚饭；</div></div>
<div class="clip" style="left:770px;top:125px;width:281px;height:22px;background:#9b4c3b;border-radius:4.5px"><div class="abs" style="left:3.6px;top:3.4px;width:15px;height:15.2px;border-radius:2px;background:rgba(255,255,255,.10)"></div><svg style="left:0;top:0" width="1" height="1"><text x="5" y="15" font-family="Liberation Sans" font-weight="bold" font-size="10.5" fill="#fff">A</text><path d="M11.6 8.6H17.4M13 11.4H17.4M13 14.2H17.4" stroke="#fff" stroke-width="1.5"/></svg><div class="chip" style="left:21.4px;top:4px;background:rgba(255,255,255,.10);width:215.6px;color:#f0dcd6">我是血管 我讨厌你每天抱着高油外卖不撒手</div></div>
<div class="clip" style="left:1053.5px;top:125px;width:46.5px;height:22px;background:#9b4c3b;border-radius:4.5px"><div class="abs" style="left:3.6px;top:3.4px;width:15px;height:15.2px;border-radius:2px;background:rgba(255,255,255,.10)"></div><svg style="left:0;top:0" width="1" height="1"><text x="5" y="15" font-family="Liberation Sans" font-weight="bold" font-size="10.5" fill="#fff">A</text><path d="M11.6 8.6H17.4M13 11.4H17.4M13 14.2H17.4" stroke="#fff" stroke-width="1.5"/></svg><div class="chip" style="left:21.4px;top:4px;background:rgba(255,255,255,.10);width:125.1px;color:#f0dcd6">也</div></div>
<div class="clip" style="left:149px;top:156px;width:390.5px;height:78px;background:#024f55;border-radius:5px">
<div class="chip" style="left:4.4px;top:3px;background:rgba(255,255,255,.10);font-size:11.4px">1.mp4</div>
<div class="chip" style="left:44.8px;top:3px;background:rgba(255,255,255,.10);font-size:11.3px">00:00:04:20</div>
<svg style="left:0;top:20px;overflow:hidden" width="390.5" height="41" viewBox="0 0 390.5 41"><use href="#thA" x="-33.8" y="0" width="55.349999999999994" height="41"/><use href="#thA" x="21.2" y="0" width="55.349999999999994" height="41"/><use href="#thA3" x="76.3" y="0" width="55.349999999999994" height="41"/><use href="#thA2" x="131.3" y="0" width="55.349999999999994" height="41"/><use href="#thA2" x="186.4" y="0" width="55.349999999999994" height="41"/><use href="#thA3" x="241.4" y="0" width="55.349999999999994" height="41"/><use href="#thA" x="296.5" y="0" width="55.349999999999994" height="41"/><use href="#thA" x="351.6" y="0" width="55.349999999999994" height="41"/></svg>
</div>
<div class="clip" style="left:541.9px;top:156px;width:425.1px;height:78px;background:#024f55;border-radius:5px">
<div class="chip" style="left:4.4px;top:3px;background:rgba(255,255,255,.10);font-size:11.4px">2.mp4</div>
<div class="chip" style="left:44.8px;top:3px;background:rgba(255,255,255,.10);font-size:11.3px">00:00:05:02</div>
<svg style="left:0;top:20px;overflow:hidden" width="425.1" height="41" viewBox="0 0 425.1 41"><use href="#thB" x="1.0" y="0" width="55.3" height="41"/><use href="#thB" x="56.0" y="0" width="55.3" height="41"/><use href="#thB2" x="111.0" y="0" width="55.3" height="41"/><use href="#thB2" x="166.0" y="0" width="55.3" height="41"/><use href="#thB2" x="221.0" y="0" width="55.3" height="41"/><use href="#thB2" x="276.0" y="0" width="55.3" height="41"/><use href="#thB2" x="331.0" y="0" width="55.3" height="41"/><use href="#thB2" x="386.0" y="0" width="55.3" height="41"/></svg>
</div>
<div class="clip" style="left:968.8px;top:156px;width:131.20000000000005px;height:78px;background:#024f55;border-radius:5px">
<div class="chip" style="left:4.4px;top:3px;background:rgba(255,255,255,.10);font-size:11.4px">3.mp4</div>
<div class="chip" style="left:44.8px;top:3px;background:rgba(255,255,255,.10);font-size:11.3px">00:00:05:02</div>
<svg style="left:0;top:20px;overflow:hidden" width="131.2" height="41" viewBox="0 0 131.2 41"><use href="#thC" x="0.4" y="0" width="55.9" height="41"/><use href="#thC" x="56.0" y="0" width="55.9" height="41"/><use href="#thC" x="111.6" y="0" width="55.9" height="41"/></svg>
</div>
<div class="clip" style="left:149px;top:243px;width:295.5px;height:53px;background:#053a51;border-radius:5px">
<svg style="left:0;top:0;overflow:hidden" width="295.5" height="53" viewBox="0 0 295.5 53"><defs><clipPath id="wc1"><rect x="0" y="0" width="295.5" height="21.9"/></clipPath></defs><path d="M5.4 53L5.4 51.5L7.4 36.2L9.6 23.7L12.4 21.8L14.6 34.8L17.9 36.2L20.7 37.6L23.5 23.7L24.9 21.8L26.3 36.2L29.1 44.6L31.8 37.6L36.0 40.4L40.2 36.2L44.3 26.5L49.9 23.7L54.1 20.1L58.2 21.2L63.8 25.1L67.9 34.8L71.3 25.1L73.5 21.5L76.3 34.8L80.4 41.8L84.6 37.6L87.4 25.1L90.2 19.6L94.3 25.1L98.5 26.5L101.8 23.7L105.4 27.9L109.6 34.8L113.8 36.2L117.9 30.7L123.5 27.9L127.7 29.3L131.8 39.0L136.0 43.2L138.8 32.1L144.3 32.1L147.1 41.8L150.7 23.7L152.7 21.5L156.8 27.9L159.6 37.6L162.4 40.4L166.6 27.9L170.7 23.7L174.1 26.5L177.7 41.8L181.8 44.6L186.0 29.3L190.2 26.5L192.9 33.4L197.1 40.4L201.3 39.0L204.6 27.9L208.2 32.1L212.4 26.5L215.7 23.7L219.3 30.7L224.9 40.4L229.1 27.9L232.4 25.1L236.0 30.7L240.2 39.0L244.3 33.4L248.5 30.1L252.7 32.1L258.2 29.3L263.8 27.3L269.3 27.3L273.5 29.3L277.7 36.2L281.8 44.6L286.0 51.5L286.0 53Z" fill="#1186ad" stroke="#1186ad" stroke-width=".8" stroke-linejoin="round"/><path d="M5.4 53L5.4 51.5L7.4 36.2L9.6 23.7L12.4 21.8L14.6 34.8L17.9 36.2L20.7 37.6L23.5 23.7L24.9 21.8L26.3 36.2L29.1 44.6L31.8 37.6L36.0 40.4L40.2 36.2L44.3 26.5L49.9 23.7L54.1 20.1L58.2 21.2L63.8 25.1L67.9 34.8L71.3 25.1L73.5 21.5L76.3 34.8L80.4 41.8L84.6 37.6L87.4 25.1L90.2 19.6L94.3 25.1L98.5 26.5L101.8 23.7L105.4 27.9L109.6 34.8L113.8 36.2L117.9 30.7L123.5 27.9L127.7 29.3L131.8 39.0L136.0 43.2L138.8 32.1L144.3 32.1L147.1 41.8L150.7 23.7L152.7 21.5L156.8 27.9L159.6 37.6L162.4 40.4L166.6 27.9L170.7 23.7L174.1 26.5L177.7 41.8L181.8 44.6L186.0 29.3L190.2 26.5L192.9 33.4L197.1 40.4L201.3 39.0L204.6 27.9L208.2 32.1L212.4 26.5L215.7 23.7L219.3 30.7L224.9 40.4L229.1 27.9L232.4 25.1L236.0 30.7L240.2 39.0L244.3 33.4L248.5 30.1L252.7 32.1L258.2 29.3L263.8 27.3L269.3 27.3L273.5 29.3L277.7 36.2L281.8 44.6L286.0 51.5L286.0 53Z" fill="#f2761c" stroke="#f2761c" stroke-width=".8" stroke-linejoin="round" clip-path="url(#wc1)"/><rect x="2" y="38.6" width="291.5" height="1" fill="#fff" opacity=".22"/></svg>
<div class="abs" style="left:3.6px;top:2.8px;width:14.6px;height:14.2px;border-radius:2px;background:rgba(255,255,255,.07)"></div><svg style="left:0;top:0" width="1" height="1"><rect x="5.2" y="5.2" width="11.4" height="9.2" rx="1.6" fill="none" stroke="#f2f2f2" stroke-width="1.2"/><path d="M10 14.6L11 15.8L12 14.6" fill="none" stroke="#f2f2f2" stroke-width="1"/><text x="7.1" y="12.3" font-family="Liberation Sans" font-weight="bold" font-size="6.4" fill="#f2f2f2" letter-spacing="-0.2">Au</text></svg>
<div class="chip" style="left:19.6px;top:3px;background:rgba(255,255,255,.09);width:115.9px;color:#e2eaee">我是脾胃 我讨厌你一...</div>
<div class="chip" style="left:144px;top:3px;background:rgba(255,255,255,.09);width:95px">文本朗读 亲切女声</div>
</div>
<div class="clip" style="left:446.5px;top:243px;width:321.0px;height:53px;background:#053a51;border-radius:5px">
<svg style="left:0;top:0;overflow:hidden" width="321.0" height="53" viewBox="0 0 321.0 53"><defs><clipPath id="wc2"><rect x="0" y="0" width="321.0" height="21.9"/></clipPath></defs><path d="M5.6 53L5.6 52.8L8.7 43.0L11.7 24.7L14.8 27.7L17.9 35.4L22.4 36.9L27.0 24.7L30.1 26.2L33.1 33.9L37.7 36.9L42.3 41.5L46.9 35.4L49.9 26.2L54.5 22.6L57.6 20.1L60.6 23.2L65.2 26.2L69.8 30.8L72.9 52.8L75.9 41.5L79.0 29.3L82.0 32.3L86.6 36.9L91.2 38.4L95.8 41.5L98.8 26.2L101.9 24.7L106.5 29.3L111.0 29.3L115.6 30.8L120.2 33.9L124.8 33.9L129.4 29.3L134.0 29.3L138.5 36.9L143.1 44.6L147.1 32.3L150.2 22.6L152.3 20.1L155.3 23.2L158.4 44.6L161.5 24.7L164.5 23.2L167.6 36.9L172.2 23.2L174.6 20.1L177.7 24.7L181.3 47.6L184.4 21.6L187.4 19.5L192.0 24.7L196.6 32.3L201.2 36.9L205.8 27.7L210.3 27.7L213.4 36.9L216.5 44.6L221.0 43.0L225.6 32.3L228.7 40.0L233.3 41.5L236.3 27.7L239.4 27.7L242.4 40.0L247.0 41.5L251.6 30.8L254.6 40.0L259.2 36.9L263.8 44.6L266.9 29.3L271.4 23.2L274.5 26.2L279.1 32.3L283.7 44.6L286.7 46.1L289.8 24.7L292.8 19.5L295.9 21.6L300.5 26.2L303.5 38.4L306.6 50.7L309.6 52.8L309.6 53Z" fill="#1186ad" stroke="#1186ad" stroke-width=".8" stroke-linejoin="round"/><path d="M5.6 53L5.6 52.8L8.7 43.0L11.7 24.7L14.8 27.7L17.9 35.4L22.4 36.9L27.0 24.7L30.1 26.2L33.1 33.9L37.7 36.9L42.3 41.5L46.9 35.4L49.9 26.2L54.5 22.6L57.6 20.1L60.6 23.2L65.2 26.2L69.8 30.8L72.9 52.8L75.9 41.5L79.0 29.3L82.0 32.3L86.6 36.9L91.2 38.4L95.8 41.5L98.8 26.2L101.9 24.7L106.5 29.3L111.0 29.3L115.6 30.8L120.2 33.9L124.8 33.9L129.4 29.3L134.0 29.3L138.5 36.9L143.1 44.6L147.1 32.3L150.2 22.6L152.3 20.1L155.3 23.2L158.4 44.6L161.5 24.7L164.5 23.2L167.6 36.9L172.2 23.2L174.6 20.1L177.7 24.7L181.3 47.6L184.4 21.6L187.4 19.5L192.0 24.7L196.6 32.3L201.2 36.9L205.8 27.7L210.3 27.7L213.4 36.9L216.5 44.6L221.0 43.0L225.6 32.3L228.7 40.0L233.3 41.5L236.3 27.7L239.4 27.7L242.4 40.0L247.0 41.5L251.6 30.8L254.6 40.0L259.2 36.9L263.8 44.6L266.9 29.3L271.4 23.2L274.5 26.2L279.1 32.3L283.7 44.6L286.7 46.1L289.8 24.7L292.8 19.5L295.9 21.6L300.5 26.2L303.5 38.4L306.6 50.7L309.6 52.8L309.6 53Z" fill="#f2761c" stroke="#f2761c" stroke-width=".8" stroke-linejoin="round" clip-path="url(#wc2)"/><rect x="2" y="38.6" width="317.0" height="1" fill="#fff" opacity=".22"/></svg>
<div class="abs" style="left:3.6px;top:2.8px;width:14.6px;height:14.2px;border-radius:2px;background:rgba(255,255,255,.07)"></div><svg style="left:0;top:0" width="1" height="1"><rect x="5.2" y="5.2" width="11.4" height="9.2" rx="1.6" fill="none" stroke="#f2f2f2" stroke-width="1.2"/><path d="M10 14.6L11 15.8L12 14.6" fill="none" stroke="#f2f2f2" stroke-width="1"/><text x="7.1" y="12.3" font-family="Liberation Sans" font-weight="bold" font-size="6.4" fill="#f2f2f2" letter-spacing="-0.2">Au</text></svg>
<div class="chip" style="left:19.6px;top:3px;background:rgba(255,255,255,.09);width:115.9px;color:#e2eaee">顿顿吃辣 更讨厌你加...</div>
<div class="chip" style="left:144.5px;top:3px;background:rgba(255,255,255,.09);width:95px">文本朗读 亲切女声</div>
</div>
<div class="clip" style="left:770px;top:243px;width:281px;height:53px;background:#053a51;border-radius:5px">
<svg style="left:0;top:0;overflow:hidden" width="281.0" height="53" viewBox="0 0 281.0 53"><defs><clipPath id="wc3"><rect x="0" y="0" width="281.0" height="21.9"/></clipPath></defs><path d="M5.2 53L5.2 52.4L8.1 40.0L11.0 25.6L13.9 29.9L16.8 35.7L19.7 38.6L24.0 32.8L26.9 37.1L31.2 38.6L35.6 35.7L38.4 27.0L41.3 25.6L44.2 34.2L47.1 41.4L50.0 42.9L52.3 22.7L55.8 19.2L59.2 22.1L63.0 27.0L67.3 29.9L71.7 31.3L74.6 28.4L77.4 44.3L80.3 38.6L83.2 40.0L86.1 25.6L89.0 22.1L91.9 27.0L96.2 28.4L100.6 27.9L104.9 35.7L109.2 35.7L113.6 31.3L117.9 29.9L122.2 34.2L126.6 31.3L130.3 29.9L133.8 35.7L138.1 42.9L142.4 31.3L145.3 27.0L148.2 34.2L151.1 38.6L154.0 27.0L157.5 25.0L161.2 27.0L164.1 42.9L167.0 31.3L169.9 44.3L174.2 28.4L177.1 25.6L181.4 28.4L185.8 29.9L190.1 28.4L194.4 34.2L197.3 27.0L201.7 25.6L204.6 35.7L207.4 37.1L211.2 27.0L214.1 25.6L216.1 37.1L220.4 50.1L223.3 37.1L226.2 35.7L229.1 41.4L232.0 40.0L234.9 28.4L238.4 27.0L242.1 35.7L246.4 38.6L250.8 28.4L255.1 25.6L259.4 27.0L262.3 37.1L265.2 45.8L268.1 50.1L271.0 52.4L271.0 53Z" fill="#1186ad" stroke="#1186ad" stroke-width=".8" stroke-linejoin="round"/><path d="M5.2 53L5.2 52.4L8.1 40.0L11.0 25.6L13.9 29.9L16.8 35.7L19.7 38.6L24.0 32.8L26.9 37.1L31.2 38.6L35.6 35.7L38.4 27.0L41.3 25.6L44.2 34.2L47.1 41.4L50.0 42.9L52.3 22.7L55.8 19.2L59.2 22.1L63.0 27.0L67.3 29.9L71.7 31.3L74.6 28.4L77.4 44.3L80.3 38.6L83.2 40.0L86.1 25.6L89.0 22.1L91.9 27.0L96.2 28.4L100.6 27.9L104.9 35.7L109.2 35.7L113.6 31.3L117.9 29.9L122.2 34.2L126.6 31.3L130.3 29.9L133.8 35.7L138.1 42.9L142.4 31.3L145.3 27.0L148.2 34.2L151.1 38.6L154.0 27.0L157.5 25.0L161.2 27.0L164.1 42.9L167.0 31.3L169.9 44.3L174.2 28.4L177.1 25.6L181.4 28.4L185.8 29.9L190.1 28.4L194.4 34.2L197.3 27.0L201.7 25.6L204.6 35.7L207.4 37.1L211.2 27.0L214.1 25.6L216.1 37.1L220.4 50.1L223.3 37.1L226.2 35.7L229.1 41.4L232.0 40.0L234.9 28.4L238.4 27.0L242.1 35.7L246.4 38.6L250.8 28.4L255.1 25.6L259.4 27.0L262.3 37.1L265.2 45.8L268.1 50.1L271.0 52.4L271.0 53Z" fill="#f2761c" stroke="#f2761c" stroke-width=".8" stroke-linejoin="round" clip-path="url(#wc3)"/><rect x="2" y="38.6" width="277.0" height="1" fill="#fff" opacity=".22"/></svg>
<div class="abs" style="left:3.6px;top:2.8px;width:14.6px;height:14.2px;border-radius:2px;background:rgba(255,255,255,.07)"></div><svg style="left:0;top:0" width="1" height="1"><rect x="5.2" y="5.2" width="11.4" height="9.2" rx="1.6" fill="none" stroke="#f2f2f2" stroke-width="1.2"/><path d="M10 14.6L11 15.8L12 14.6" fill="none" stroke="#f2f2f2" stroke-width="1"/><text x="7.1" y="12.3" font-family="Liberation Sans" font-weight="bold" font-size="6.4" fill="#f2f2f2" letter-spacing="-0.2">Au</text></svg>
<div class="chip" style="left:19.6px;top:3px;background:rgba(255,255,255,.09);width:115.4px;color:#e2eaee">我是血管 我讨厌你每...</div>
<div class="chip" style="left:144px;top:3px;background:rgba(255,255,255,.09);width:95px">文本朗读 亲切女声</div>
</div>
<div class="clip" style="left:1054px;top:243px;width:46px;height:53px;background:#053a51;border-radius:5px">
<svg style="left:0;top:0;overflow:hidden" width="46.0" height="53" viewBox="0 0 46.0 53"><defs><clipPath id="wc4"><rect x="0" y="0" width="46.0" height="21.9"/></clipPath></defs><path d="M4.3 53L4.3 52.4L7.2 42.9L10.1 24.1L11.6 20.4L14.4 25.6L17.3 31.3L20.2 40.0L23.1 31.3L26.0 34.2L28.9 34.2L28.9 53Z" fill="#1186ad" stroke="#1186ad" stroke-width=".8" stroke-linejoin="round"/><path d="M4.3 53L4.3 52.4L7.2 42.9L10.1 24.1L11.6 20.4L14.4 25.6L17.3 31.3L20.2 40.0L23.1 31.3L26.0 34.2L28.9 34.2L28.9 53Z" fill="#f2761c" stroke="#f2761c" stroke-width=".8" stroke-linejoin="round" clip-path="url(#wc4)"/><rect x="2" y="38.6" width="42.0" height="1" fill="#fff" opacity=".22"/></svg>
<div class="abs" style="left:3.6px;top:2.8px;width:14.6px;height:14.2px;border-radius:2px;background:rgba(255,255,255,.07)"></div><svg style="left:0;top:0" width="1" height="1"><rect x="5.2" y="5.2" width="11.4" height="9.2" rx="1.6" fill="none" stroke="#f2f2f2" stroke-width="1.2"/><path d="M10 14.6L11 15.8L12 14.6" fill="none" stroke="#f2f2f2" stroke-width="1"/><text x="7.1" y="12.3" font-family="Liberation Sans" font-weight="bold" font-size="6.4" fill="#f2f2f2" letter-spacing="-0.2">Au</text></svg>
<div class="chip" style="left:19.6px;top:3px;background:rgba(255,255,255,.09);width:126.4px;color:#e2eaee">也</div>
</div>
<div class="abs" style="left:147.5px;top:45px;width:1.7px;height:280px;background:#a4a4a4"></div>
<div class="abs" style="left:143px;top:36.2px;width:11px;height:15px;border:2px solid #fff;border-radius:3px 3px 6px 6px;background:#262626"></div>
</div>
</body></html>
